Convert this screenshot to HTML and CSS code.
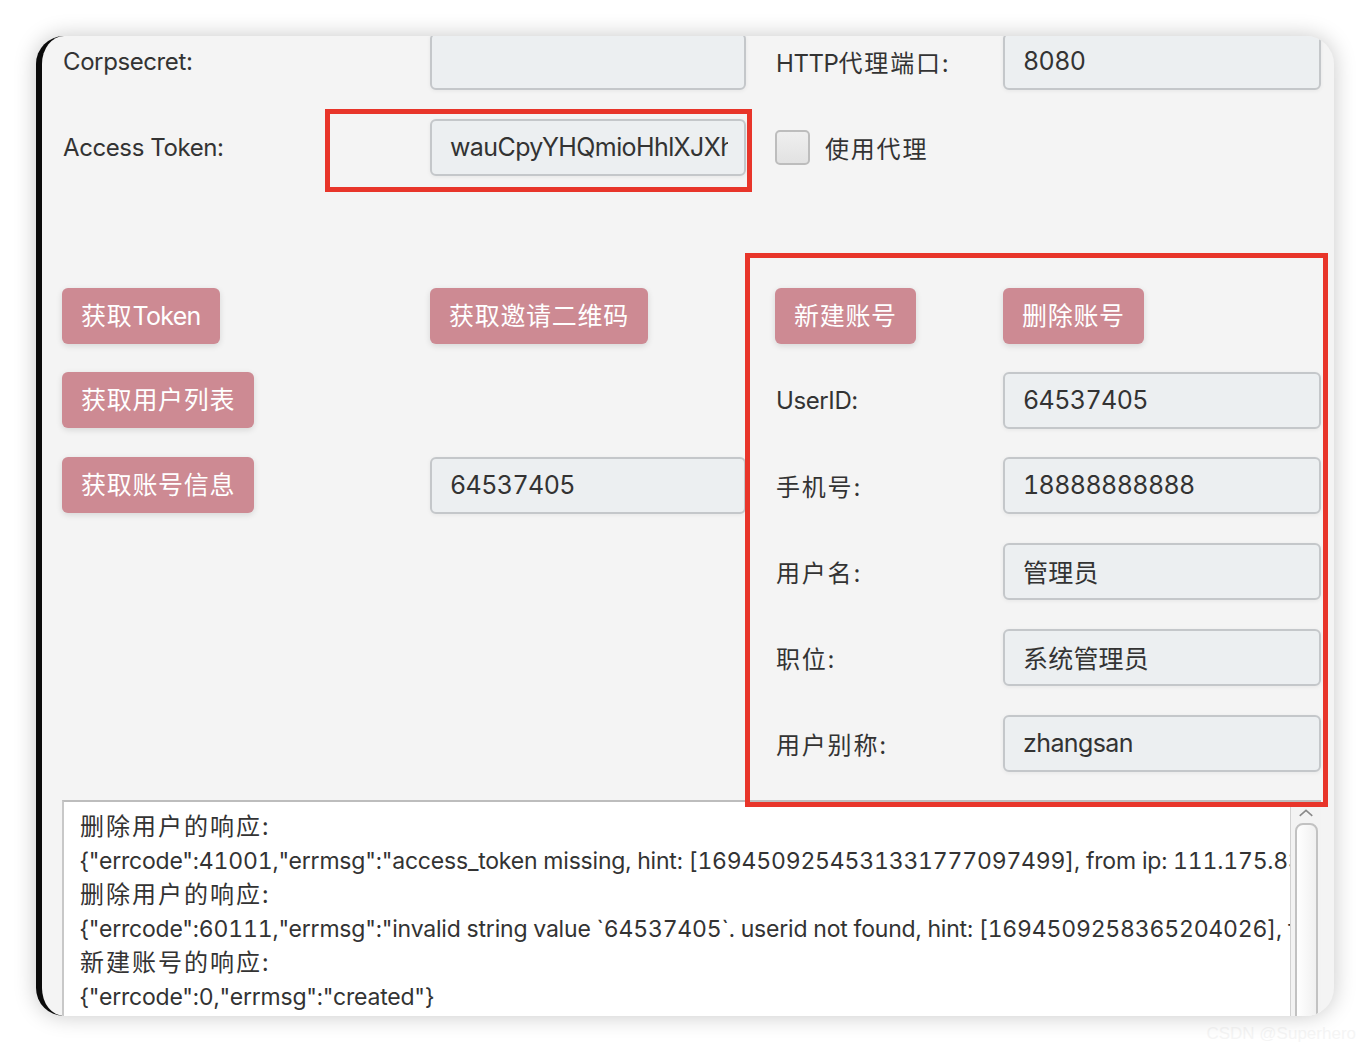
FILE: index.html
```html
<!DOCTYPE html>
<html lang="zh-CN">
<head>
  <meta charset="UTF-8" />
  <title>企业微信账号工具</title>
  <link rel="stylesheet" href="styles.css">
</head>
<body>
  <div class="window">
    <div class="form">
      <!-- row 1 -->
      <div class="label">Corpsecret:</div>
      <div class="field narrow"></div>
      <div class="label">HTTP<span class="cn">代理端口</span>:</div>
      <div class="field"><span>8080</span></div>

      <!-- row 2 -->
      <div class="label">Access Token:</div>
      <div class="field narrow"><span>wauCpyYHQmioHhlXJXhTq2MbZ</span></div>
      <div class="check-row">
        <span class="checkbox"></span>
        <span class="label cn">使用代理</span>
      </div>
      <div></div>

      <!-- row 3 (empty) -->
      <div class="spacer"></div>

      <!-- row 4 -->
      <div><button class="btn">获取<span class="latin">Token</span></button></div>
      <div><button class="btn">获取邀请二维码</button></div>
      <div><button class="btn">新建账号</button></div>
      <div><button class="btn">删除账号</button></div>

      <!-- row 5 -->
      <div><button class="btn">获取用户列表</button></div>
      <div></div>
      <div class="label">UserID:</div>
      <div class="field"><span>64537405</span></div>

      <!-- row 6 -->
      <div><button class="btn">获取账号信息</button></div>
      <div class="field narrow"><span>64537405</span></div>
      <div class="label cn">手机号:</div>
      <div class="field"><span>18888888888</span></div>

      <!-- row 7 -->
      <div></div>
      <div></div>
      <div class="label cn">用户名:</div>
      <div class="field"><span class="cn">管理员</span></div>

      <!-- row 8 -->
      <div></div>
      <div></div>
      <div class="label cn">职位:</div>
      <div class="field"><span class="cn">系统管理员</span></div>

      <!-- row 9 -->
      <div></div>
      <div></div>
      <div class="label cn">用户别称:</div>
      <div class="field"><span>zhangsan</span></div>
    </div>

    <div class="console">
      <div class="console-text">
        <div class="cn">删除用户的响应:</div>
        <div>{"errcode":41001,"errmsg":"access_token missing, hint: [1694509254531331777097499], from ip: 111.175.83.20, more info at https://open.work.weixin.qq.com"}</div>
        <div class="cn">删除用户的响应:</div>
        <div>{"errcode":60111,"errmsg":"invalid string value `64537405`. userid not found, hint: [1694509258365204026], from ip: 111.175.83.20"}</div>
        <div class="cn">新建账号的响应:</div>
        <div>{"errcode":0,"errmsg":"created"}</div>
      </div>
      <div class="scrollbar">
        <svg class="arrow" width="20" height="12" viewBox="0 0 20 12">
          <path d="M2 10 L10 3 L18 10" fill="none" stroke="#8a8a8a" stroke-width="2"/>
        </svg>
        <div class="thumb"></div>
      </div>
    </div>

    <div class="mark mark-token"></div>
    <div class="mark mark-account"></div>
  </div>
  <div class="watermark">CSDN @Superhero</div>
</body>
</html>
```

FILE: styles.css
```css
:root {
  --window: #f4f4f4;
  --text: #333333;
  --field-bg: #eceff1;
  --field-border: #c4c7ca;
  --button: #cd8a93;
  --mark: #e8352a;
}

body {
  margin: 0;
  padding: 36px 36px 0;
  background: #ffffff;
  font-family: Inter, "Noto Sans CJK SC", sans-serif;
  color: var(--text);
}

.window {
  position: relative;
  box-sizing: border-box;
  width: 1298px;
  height: 980px;
  background: var(--window);
  border-left: 6px solid #0b0b0b;
  border-radius: 28px;
  overflow: hidden;
  box-shadow: 0 0 22px rgba(0, 0, 0, 0.22);
}

.form {
  display: grid;
  grid-template-columns: 368px 345px 228px 318px;
  grid-template-rows: 86px 86px 84px 84px 84px 86px 86px 86px 86px;
  align-items: center;
  margin-top: -18px;
  padding-left: 20px;
}

.spacer {
  grid-column: 1 / -1;
}

.label {
  font-size: 24px;
  padding-left: 1px;
  letter-spacing: -0.4px;
  white-space: nowrap;
}

.label.cn,
.label .cn {
  letter-spacing: 1.8px;
}

.field {
  box-sizing: border-box;
  height: 57px;
  display: flex;
  align-items: center;
  padding: 0 16px 0 18px;
  background: var(--field-bg);
  border: 2px solid var(--field-border);
  border-radius: 6px;
  font-size: 25px;
  box-shadow: 0 1px 4px rgba(0, 0, 0, 0.06);
}

.field.narrow {
  width: 316px;
}

.field span {
  display: block;
  overflow: hidden;
  white-space: nowrap;
  letter-spacing: -0.6px;
  font-variant-numeric: tabular-nums;
}

.field span.cn {
  letter-spacing: 0.2px;
}

.check-row {
  display: flex;
  align-items: center;
  gap: 14px;
}

.checkbox {
  box-sizing: border-box;
  width: 35px;
  height: 35px;
  border: 2px solid #bdbdbd;
  border-radius: 5px;
  background: linear-gradient(#efefef, #e2e2e2);
}

.btn {
  height: 56px;
  padding: 0 19px 5px;
  border: none;
  border-radius: 6px;
  background: var(--button);
  color: #ffffff;
  font-family: Inter, "Noto Sans CJK SC", sans-serif;
  font-size: 25px;
  letter-spacing: 0.7px;
  box-shadow: 0 2px 6px rgba(0, 0, 0, 0.12);
}

.btn .latin {
  letter-spacing: -0.7px;
}

.console {
  display: flex;
  box-sizing: border-box;
  width: 1259px;
  height: 260px;
  margin: 14px 0 0 20px;
  background: #ffffff;
  border-top: 2px solid #bdbdbd;
  border-left: 2px solid #c8c8c8;
}

.console-text {
  flex: 1;
  overflow: hidden;
  padding: 8px 0 0 16px;
  font-size: 23px;
  line-height: 34px;
  white-space: nowrap;
  letter-spacing: -0.2px;
  font-variant-numeric: tabular-nums;
}

.console-text .cn {
  font-size: 24px;
  letter-spacing: 2px;
}

.scrollbar {
  width: 30px;
  display: flex;
  flex-direction: column;
  align-items: center;
  background: #f3f3f3;
  border-left: 1px solid #d2d2d2;
}

.arrow {
  margin-top: 6px;
}

.thumb {
  box-sizing: border-box;
  width: 23px;
  height: 300px;
  margin-top: 6px;
  border: 2px solid #c2c2c2;
  border-radius: 8px;
  background: linear-gradient(90deg, #ffffff, #f0f0f0);
}

.mark {
  position: absolute;
  box-sizing: border-box;
  border: 5px solid var(--mark);
}

.mark-token {
  left: 283px;
  top: 73px;
  width: 427px;
  height: 83px;
}

.mark-account {
  left: 703px;
  top: 217px;
  width: 583px;
  height: 554px;
}

.watermark {
  text-align: right;
  padding: 8px 0 0;
  margin-right: -22px;
  font-family: "Liberation Sans", sans-serif;
  font-size: 17px;
  color: #f5f5f5;
}
```
